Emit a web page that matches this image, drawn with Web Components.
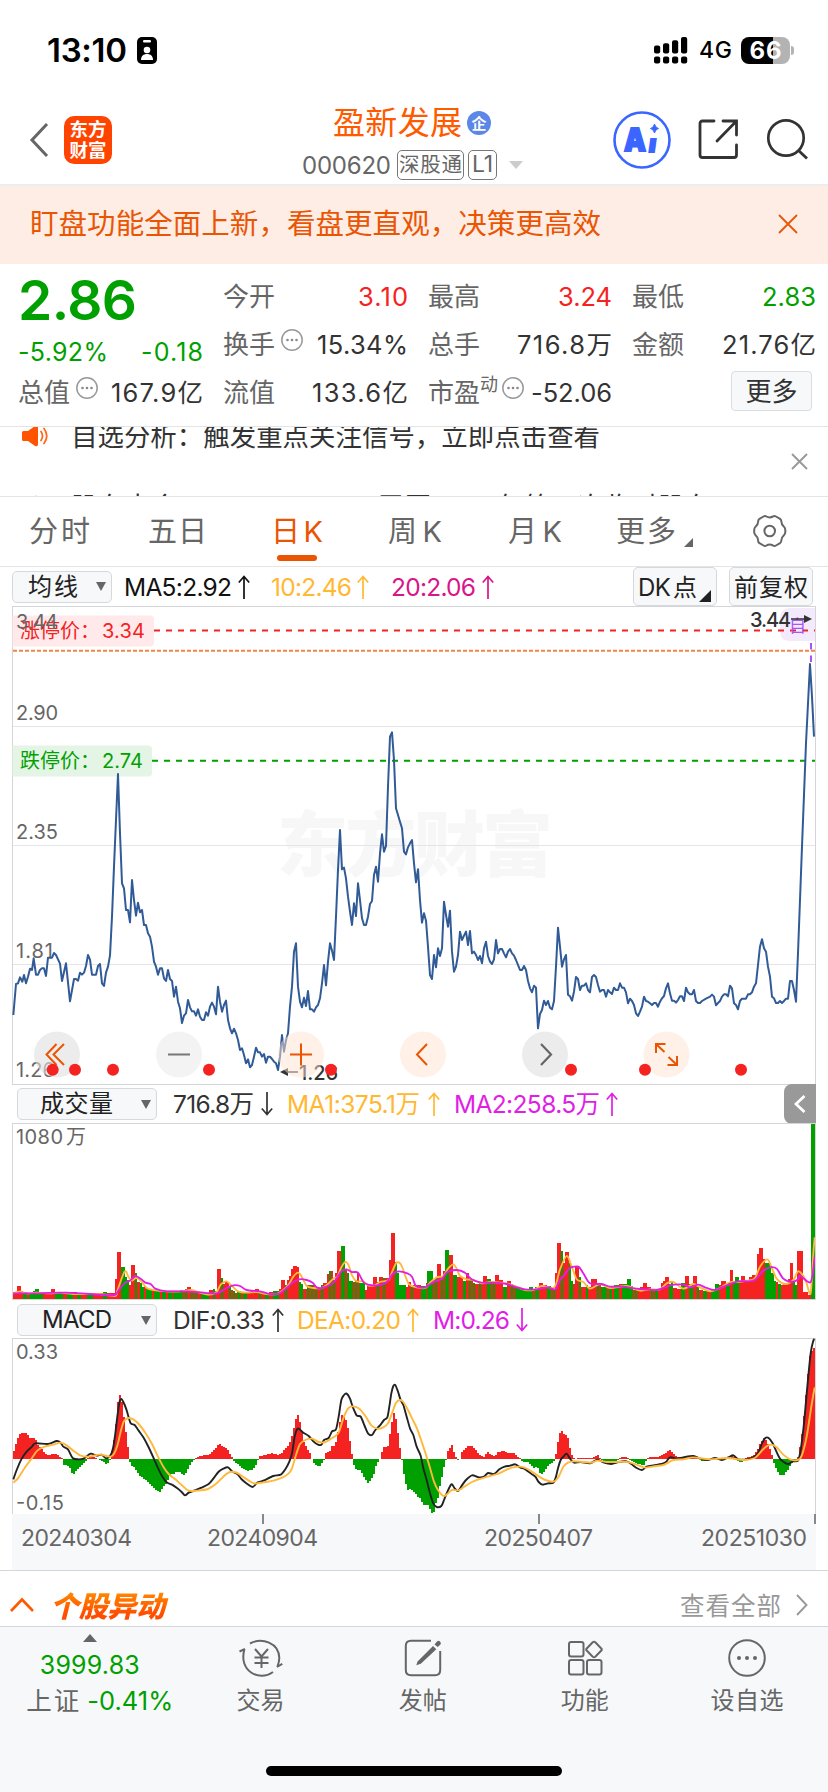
<!DOCTYPE html>
<html lang="zh-CN">
<head>
<meta charset="UTF-8">
<title>盈新发展 000620</title>
<style>
    body {
        margin: 0;
        width: 828px;
        height: 1792px;
        overflow: hidden;
        background: #fff;
        color: #333;
        font-family: Inter, "Noto Sans CJK SC", sans-serif;
        --up: #f52222;
        --down: #00a000;
        --brand: #ea5504;
    }
</style>
</head>
<body>
<stock-page></stock-page>

<script>
// small helper, every element renders static markup into an open root
function define(name, html) {
    customElements.define(name, class extends HTMLElement {
        constructor() {
            super();
            this.attachShadow({ mode: 'open' });
            this.shadowRoot.innerHTML = typeof html === 'function' ? html(this) : html;
        }
    });
}

/* ---------- icons ---------- */
const ICONS = {
    badge: [20, 27, '<rect width="20" height="27" rx="5" fill="#000"/><rect x="6" y="3" width="8" height="2.4" rx="1.2" fill="#fff"/><circle cx="10" cy="13" r="3.3" fill="#fff"/><path d="M4 23c0-4 2.5-6 6-6s6 2 6 6z" fill="#fff"/>'],
    signal: [34, 27, '<g fill="#000"><rect x="0" y="8.500" width="6.200" height="8" rx="2"/><rect x="9" y="6.200" width="6.200" height="10.300" rx="2"/><rect x="18" y="3.200" width="6.200" height="13.300" rx="2"/><rect x="27" y="0" width="6.200" height="16.500" rx="2"/><rect x="0" y="19.500" width="6.200" height="7" rx="2"/><rect x="9" y="19.500" width="6.200" height="7" rx="2"/><rect x="18" y="19.500" width="6.200" height="7" rx="2"/><rect x="27" y="19.500" width="6.200" height="7" rx="2"/></g>'],
    back: [20, 34, '<path d="M18 1 3 17l15 16" fill="none" stroke="#666" stroke-width="3"/>'],
    share: [42, 42, '<path d="M16 2H4.500Q2 2 2 4.500V36q0 2.500 2.500 2.500H36q2.500 0 2.500-2.500V26M25 2h13.500v14M38 2.500 19 22" fill="none" stroke="#333" stroke-width="2.800" stroke-linecap="round"/>'],
    search: [42, 42, '<circle cx="19" cy="19" r="17.700" fill="none" stroke="#333" stroke-width="2.700"/><path d="m31 31 9 8.500" stroke="#333" stroke-width="2.800"/>'],
    bigX: [20, 20, '<path d="m1 1 18 18M19 1 1 19" stroke="#ea5504" stroke-width="1.800"/>'],
    smallX: [17, 17, '<path d="m1 1 15 15M16 1 1 16" stroke="#999" stroke-width="1.900"/>'],
    more: [22, 22, '<circle cx="11" cy="11" r="10.200" fill="none" stroke="#999" stroke-width="1.500"/><g fill="#888"><circle cx="6.500" cy="11" r="1.300"/><circle cx="11" cy="11" r="1.300"/><circle cx="15.500" cy="11" r="1.300"/></g>'],
    horn: [27, 20, '<path d="M0 6.500q0-1.500 1.500-1.500H6l7-5q3-1 3 1.500v17q0 2.500-3 1.500l-7-5H1.500Q0 15 0 13.500z" fill="#ff5500"/><path d="M19 5.500q3 4.500 0 9M22 2.500q5.500 7.500 0 15" fill="none" stroke="#ff6a20" stroke-width="1.800" stroke-linecap="round"/>'],
    gear: [34, 32, '<path d="M10.500 1.500q1.500-1 3 0 3 1.800 6.500 0 1.500-1 3 0l4 2.300q1.500 1 1.400 3 0 2.500 2.300 4.600 1.600 1.600 1.600 3.300v2.600q0 1.700-1.600 3.300-2.300 2.100-2.300 4.600 0 2-1.400 3l-4 2.300q-1.500 1-3 0-3.500-1.800-6.500 0-1.500 1-3 0l-4-2.300q-1.500-1-1.400-3 0-2.500-2.300-4.600-1.600-1.600-1.600-3.300v-2.600q0-1.700 1.600-3.300 2.300-2.100 2.300-4.600 0-2 1.400-3z" fill="none" stroke="#666" stroke-width="2"/><circle cx="16.700" cy="16" r="5.300" fill="none" stroke="#666" stroke-width="2"/>'],
    up: [12, 24, '<path d="M6 24V1.500M.8 7.500 6 1.500l5.200 6" fill="none" stroke="currentColor" stroke-width="1.700"/>'],
    down: [12, 24, '<path d="M6 0v22.500M.8 16.500 6 22.500l5.200-6" fill="none" stroke="currentColor" stroke-width="1.700"/>'],
    drop: [10, 9, '<path d="M0 0h10L5 9z" fill="#666"/>'],
    fold: [24, 14, '<path d="M1 13 12 1.500 23 13" fill="none" stroke="#ff5a00" stroke-width="2.600"/>'],
    next: [12, 22, '<path d="m1 1 9.500 10L1 21" fill="none" stroke="#999" stroke-width="1.900"/>'],
    trade: [42, 40, '<g fill="none" stroke="#666" stroke-width="2"><path d="M10 4.500C22-2 39 4 39.300 19q0 4-2 9M36.800 28l5.500-3.200"/><path d="M33 33C19 43-2 32 4.500 10M5 10-.5 12.500"/><path d="m15 10 6.500 7.500L28 10M14.500 18.500h14M14.500 24h14M21.500 17.500V29"/></g>'],
    post: [38, 38, '<path d="M27 1.800H7Q1.800 1.800 1.800 7v24q0 5.200 5.200 5.200h24q5.200 0 5.200-5.200V12" fill="none" stroke="#666" stroke-width="2"/><path d="M13.500 22.500 29 7l3.300 3.300-15.500 14.500-4.500 1.500zM30.500 5.500 33 2.500q1.500-1.500 3 0t.5 3L33.700 8z" fill="#666"/>'],
    grid: [34, 36, '<g fill="none" stroke="#666" stroke-width="2"><rect x="1" y="2" width="14.500" height="14.500" rx="2.200"/><rect x="1" y="20" width="14.500" height="14.500" rx="2.200"/><rect x="19" y="20" width="14.500" height="14.500" rx="2.200"/><path d="m24.700 2.300-6 6.200q-1 1 0 2l6 6.200q1.300 1 2.600 0l6-6.200q1-1 0-2l-6-6.200q-1.300-1-2.600 0z"/></g>'],
    dots: [38, 38, '<circle cx="19" cy="19" r="17.800" fill="none" stroke="#666" stroke-width="2"/><g fill="#666"><circle cx="11" cy="19" r="2"/><circle cx="19" cy="19" r="2"/><circle cx="27" cy="19" r="2"/></g>']
};

define('app-icon', el => {
    const [w, h, body] = ICONS[el.getAttribute('name')];
    return `
        <style>
            :host { display: block; flex: none; width: ${w}px; height: ${h}px; }
            svg { display: block; overflow: visible; }
        </style>
        <svg width="${w}" height="${h}" viewBox="0 0 ${w} ${h}">${body}</svg>`;
});

/* ---------- status bar ---------- */
define('status-bar', `
    <style>
        :host { display: flex; align-items: center; height: 26px; padding: 37px 34px 31px 47px; color: #000; }
        .time { font-size: 33px; font-weight: 600; }
        .net { font-size: 23px; font-weight: 500; margin-left: 11px; }
        .battery {
            display: flex; justify-content: center;
            width: 49px; height: 27px; line-height: 27px; margin-left: 9px; border-radius: 8px;
            background: linear-gradient(90deg, #000 66%, #b3b3b3 66%);
            color: #fff; font-size: 24px; font-weight: 700;
        }
        .nub { width: 3px; height: 9px; margin-left: 1px; border-radius: 0 5px 5px 0; background: #b3b3b3; }
    </style>
    <text-run class="time" w="80">13:10</text-run>
    <app-icon name="badge" style="margin-left:10px"></app-icon>
    <app-icon name="signal" style="margin-left:auto"></app-icon>
    <text-run class="net" w="33">4G</text-run>
    <div class="battery"><text-run w="32">66</text-run></div>
    <div class="nub"></div>
`);

/* ---------- header ---------- */
define('stock-header', `
    <style>
        :host { display: grid; grid-template-columns: 302px 231px 1fr; height: 90px; border-bottom: 2px solid #ececec; }
        .left, .right { display: flex; align-items: center; padding-top: 1px; }
        .left { padding-left: 29px; gap: 15px; }
        .logo {
            width: 48px; height: 43px; padding: 2px 0 3px; border-radius: 10px; background: #ff4400; color: #fff;
            font: 700 18.500px/21px "Noto Sans CJK SC"; text-align: center;
        }
        .mid { padding-top: 8px; }
        .name { display: flex; align-items: center; height: 42px; margin-bottom: 5px; padding-left: 31px; gap: 5px; color: #ff5a00; font-size: 32px; line-height: 42px; }
        .corp { width: 24px; height: 24px; border-radius: 50%; background: #5b87e8; color: #fff; font: 700 15px/23px "Noto Sans CJK SC"; text-align: center; }
        .code { display: flex; align-items: center; height: 32px; color: #666; font-size: 24px; }
        .tag { box-sizing: border-box; height: 30px; border: 1.500px solid #777; border-radius: 5px; line-height: 27px; padding: 0 1px; font-size: 20.500px; margin-left: 6px; }
        .tri { margin-left: 12px; border: 7.500px solid transparent; border-top: 8px solid #ccc; border-bottom: 0; }
        .right { padding-left: 80px; }
        svg { display: block; flex: none; overflow: visible; }
    </style>
    <div class="left"><app-icon name="back"></app-icon><div class="logo">东方<br>财富</div></div>
    <div class="mid">
        <div class="name"><text-run w="129">盈新发展</text-run><div class="corp">企</div></div>
        <div class="code">
            <text-run w="89">000620</text-run>
            <div class="tag"><text-run w="63">深股通</text-run></div>
            <div class="tag" style="margin-left:4px;padding:0 3px;font-size:23px"><text-run w="21">L1</text-run></div>
            <div class="tri"></div>
        </div>
    </div>
    <div class="right">
        <svg width="58" height="58" viewBox="0 0 58 58">
            <circle cx="29" cy="29" r="27.500" fill="none" stroke="#3a66ff" stroke-width="2.600"/>
            <g fill="#3a66ff" stroke="#3a66ff" stroke-width="1.800" font-family="Inter" font-weight="900" font-size="31">
                <text x="11" y="40" textLength="22" lengthAdjust="spacingAndGlyphs">A</text>
                <text x="0" y="0" transform="translate(35 41) skewX(-8)" font-size="24">ı</text>
            </g>
            <path d="M41.500 13q.8 3.700 4 4.500-3.200.8-4 4.500-.8-3.700-4-4.500 3.200-.8 4-4.500z" fill="#3a66ff" stroke="#3a66ff"/>
        </svg>
        <app-icon name="share" style="margin-left:27px"></app-icon>
        <app-icon name="search" style="margin-left:27px"></app-icon>
    </div>
`);

/* ---------- notice ---------- */
define('notice-banner', `
    <style>
        :host { display: flex; align-items: center; justify-content: space-between; height: 78px; padding: 0 30px; background: #fdede4; color: var(--brand); font-size: 28.500px; }
        text-run { line-height: 40px; margin-bottom: 3px; }
        app-icon { margin-bottom: 2px; }
    </style>
    <text-run w="571"><slot></slot></text-run>
    <app-icon name="bigX"></app-icon>
`);

/* ---------- quote ---------- */
define('quote-cell', el => `
    <style>
        :host { display: flex; align-items: center; height: 48px; line-height: 48px; }
        .label { color: #666; font-size: 26px; flex: none; }
        .value { margin-left: auto; font-size: 25.500px; color: ${el.getAttribute('color') || '#333'}; }
        sup { font-size: 18px; line-height: 20px; color: #666; margin: 0 2px 17px 0; vertical-align: 0; }
        app-icon { margin: 0 0 10px 6px; }
        sup + app-icon { margin-left: 2px; }
    </style>
    <span class="label">${el.getAttribute('label')}</span>
    ${el.hasAttribute('sup') ? `<sup>${el.getAttribute('sup')}</sup>` : ''}
    ${el.hasAttribute('info') ? '<app-icon name="more"></app-icon>' : ''}
    <text-run class="value" w="${el.getAttribute('w')}">${el.getAttribute('value')}</text-run>
`);

define('quote-panel', `
    <style>
        :host { display: grid; grid-template-columns: 185px 185px 184px 184px; column-gap: 20px; height: 153px; padding: 9px 12px 0 18px; border-bottom: 1px solid #e4e4e4; width: 798px; }
        .col { display: flex; flex-direction: column; }
        .price { height: 55px; line-height: 54px; font-size: 55px; font-weight: 600; color: var(--down); }
        .chg { display: flex; justify-content: space-between; height: 41px; line-height: 49px; font-size: 25px; color: var(--down); }
        .more { box-sizing: border-box; width: 81px; height: 40px; margin: 2px 4px 0 auto; border: 1.500px solid #dadde2; border-radius: 4px; background: #f6f8fa; font-size: 26px; line-height: 39px; text-align: center; }
    </style>
    <div class="col">
        <text-run class="price" w="119">2.86</text-run>
        <div class="chg"><text-run w="90">-5.92%</text-run><text-run w="62">-0.18</text-run></div>
        <quote-cell label="总值" info value="167.9亿" w="92"></quote-cell>
    </div>
    <div class="col">
        <quote-cell label="今开" value="3.10" w="50" color="var(--up)"></quote-cell>
        <quote-cell label="换手" info value="15.34%" w="91"></quote-cell>
        <quote-cell label="流值" value="133.6亿" w="96"></quote-cell>
    </div>
    <div class="col">
        <quote-cell label="最高" value="3.24" w="54" color="var(--up)"></quote-cell>
        <quote-cell label="总手" value="716.8万" w="95"></quote-cell>
        <quote-cell label="市盈" sup="动" info value="-52.06" w="81"></quote-cell>
    </div>
    <div class="col">
        <quote-cell label="最低" value="2.83" w="54" color="var(--down)"></quote-cell>
        <quote-cell label="金额" value="21.76亿" w="94"></quote-cell>
        <div class="more">更多</div>
    </div>
`);

/* ---------- scrolling ticker, caught between two rows ---------- */
define('news-ticker', `
    <style>
        :host { display: flex; height: 69px; padding-right: 20px; border-bottom: 1px solid #e4e4e4; overflow: hidden; }
        .rows { flex: 1; margin-top: -26px; }
        .row { display: flex; align-items: center; height: 70px; padding-left: 22px; font-size: 26.400px; line-height: 40px; }
        text-run { margin-left: 22px; }
        .x { margin-top: 26px; }
    </style>
    <div class="rows">
        <div class="row"><app-icon name="horn"></app-icon><text-run w="529">自选分析：触发重点关注信号，立即点击查看</text-run></div>
        <div class="row"><app-icon name="horn"></app-icon><text-run w="640">股东大会：于2025-10-31召开2025年第三次临时股东</text-run></div>
    </div>
    <app-icon class="x" name="smallX"></app-icon>
`);

/* ---------- period tabs ---------- */
define('period-tab', `
    <style>
        :host { display: flex; flex-direction: column; align-items: center; height: 69px; line-height: 70px; font-size: 29px; color: #666; }
        :host([active]) { color: var(--brand); }
        :host([active])::after { content: ""; width: 40px; height: 6px; margin-top: -12px; border-radius: 3px; background: var(--brand); }
    </style>
    <slot></slot>
`);

define('period-tabs', `
    <style>
        :host { display: flex; height: 69px; padding-left: 29px; border-bottom: 1px solid #e4e4e4; }
        .tri { align-self: flex-start; margin: 41px 0 0 8px; border-left: 9px solid transparent; border-bottom: 9px solid #666; }
        app-icon { margin: 18px 0 0 60px; }
    </style>
    <period-tab><text-run w="61">分时</text-run></period-tab>
    <period-tab style="margin-left:58px"><text-run w="59">五日</text-run></period-tab>
    <period-tab style="margin-left:64px" active><text-run w="52">日K</text-run></period-tab>
    <period-tab style="margin-left:65px"><text-run w="54">周K</text-run></period-tab>
    <period-tab style="margin-left:66px"><text-run w="54">月K</text-run></period-tab>
    <period-tab style="margin-left:54px"><text-run w="60">更多</text-run></period-tab>
    <div class="tri"></div>
    <app-icon name="gear"></app-icon>
`);

/* ---------- indicator bars ---------- */
define('pick-box', `
    <style>
        :host { box-sizing: border-box; display: flex; align-items: center; flex: none; height: 32px; line-height: 30px; border: 1.500px solid #d5d9de; border-radius: 5px; background: #f6f8fa; color: #222; font-size: 24px; padding-right: 5px; }
        app-icon { margin-left: auto; }
    </style>
    <slot></slot><app-icon name="drop"></app-icon>
`);

define('index-value', el => `
    <style>
        :host { display: flex; align-items: center; gap: ${el.getAttribute('gap') || 7}px; font-size: 24.500px; line-height: 36px; }
    </style>
    <text-run w="${el.getAttribute('w')}"><slot></slot></text-run><app-icon name="${el.getAttribute('dir')}"></app-icon>
`);

define('ma-bar', `
    <style>
        :host { display: flex; align-items: center; height: 39px; padding-left: 12px; }
        .btn { box-sizing: border-box; height: 39px; border: 1.500px solid #d5d9de; border-radius: 5px; background: #f6f8fa; color: #222; font-size: 24px; line-height: 40px; position: relative; }
        .btn i { position: absolute; right: 5px; bottom: 3px; border-left: 12px solid transparent; border-bottom: 12px solid #222; }
        .dk { display: flex; gap: 2px; }
    </style>
    <pick-box style="width:100px"><text-run w="50" style="margin-left:15px">均线</text-run></pick-box>
    <index-value style="margin-left:12px;color:#111" w="108" gap="6" dir="up">MA5:2.92</index-value>
    <index-value style="margin-left:21px;color:#ffb830" w="81" gap="5" dir="up">10:2.46</index-value>
    <index-value style="margin-left:22px;color:#d8158a" w="85" gap="6" dir="up">20:2.06</index-value>
    <div class="btn dk" style="width:84px;margin-left:139px"><text-run w="33" style="margin-left:4px">DK</text-run><text-run w="24">点</text-run><i></i></div>
    <div class="btn" style="width:84px;margin-left:12px"><text-run w="74" style="margin-left:4px">前复权</text-run></div>
`);

define('volume-bar', `
    <style>
        :host { display: flex; align-items: center; height: 38px; padding-left: 17px; }
        .tab { display: grid; place-items: center; width: 32px; height: 40px; margin: 0 12px 0 auto; border-radius: 8px 0 0 8px; background: #999; }
    </style>
    <pick-box style="width:140px"><text-run w="73" style="margin-left:22px">成交量</text-run></pick-box>
    <index-value style="margin-left:16px" w="81" gap="7" dir="down">716.8万</index-value>
    <index-value style="margin-left:14px;color:#ffb830" w="133" gap="8" dir="up">MA1:375.1万</index-value>
    <index-value style="margin-left:14px;color:#e01ee6" w="146" gap="6" dir="up">MA2:258.5万</index-value>
    <div class="tab"><svg width="12" height="18"><path d="M10.500 1 2 9l8.500 8" fill="none" stroke="#fff" stroke-width="2.800"/></svg></div>
`);

define('macd-bar', `
    <style>
        :host { box-sizing: border-box; display: flex; align-items: center; height: 38px; padding: 2px 0 0 17px; }
    </style>
    <pick-box style="width:140px"><text-run w="70" style="margin-left:24px">MACD</text-run></pick-box>
    <index-value style="margin-left:16px" w="92" gap="7" dir="up">DIF:0.33</index-value>
    <index-value style="margin-left:13px;color:#ffb830" w="104" gap="6" dir="up">DEA:0.20</index-value>
    <index-value style="margin-left:14px;color:#e01ee6" w="77" gap="6" dir="down">M:0.26</index-value>
`);

/* ---------- chart data, in device pixels of the 3x canvas ---------- */
const parse = s => s.trim().split(/\s+/).map(p => p.split(',').map(Number));
// left and right half of a series share one y scale
const join = (a, b) => parse(a).concat(parse(b).map(([x, y]) => [x + 1230, y]).filter(p => p[0] >= 1262));
const line = pts => 'M' + pts.map(p => p.join(' ')).join('L');
function smooth(pts) {
    let d = 'M' + pts[0];
    for (let i = 0; i < pts.length - 1; i++) {
        const a = pts[Math.max(i - 1, 0)], b = pts[i], c = pts[i + 1], e = pts[Math.min(i + 2, pts.length - 1)];
        const k = 7;
        d += `C${b[0] + (c[0] - a[0]) / k} ${b[1] + (c[1] - a[1]) / k} ${c[0] - (e[0] - b[0]) / k} ${c[1] - (e[1] - b[1]) / k} ${c}`;
    }
    return d;
}

const PRICE = join(`40,1245 48,1152 54,1150 60,1132 67,1145 72,1125 78,1150 84,1130 90,1106 96,1110 101,1075 108,1124 114,1124 120,1110 126,1105 132,1105 138,1128 144,1073 156,1073 162,1059 168,1065 180,1091 186,1143 198,1090 210,1204 222,1137 228,1137 234,1142 240,1118 246,1124 252,1118 258,1098 264,1065 270,1079 276,1124 288,1124 294,1098 300,1092 306,1150 312,1158 318,1118 324,1100 330,1066 336,950 342,800 348,660 354,522 360,700 366,850 372,865 378,930 384,930 390,967 396,840 402,900 408,947 414,908 420,937 426,930 432,975 438,975 444,1000 450,1010 456,1040 462,1085 468,1100 474,1124 480,1105 486,1105 492,1135 498,1143 504,1110 510,1137 516,1143 522,1190 528,1160 534,1205 540,1225 546,1269 552,1247 558,1240 564,1200 570,1222 576,1234 582,1234 588,1247 594,1228 600,1250 606,1260 612,1260 618,1237 624,1247 630,1220 636,1208 642,1220 648,1243 654,1160 660,1205 666,1235 672,1215 678,1202 684,1260 690,1285 696,1300 702,1286 708,1300 714,1320 720,1350 726,1345 732,1365 738,1390 744,1378 750,1402 756,1395 762,1370 768,1343 774,1357 780,1357 786,1370 792,1362 798,1388 804,1370 810,1370 816,1377 822,1385 828,1390 834,1410 840,1370 846,1305 852,1355 858,1320 864,1300 870,1220 876,1160 882,1055 888,1030 894,1160 900,1205 906,1222 912,1193 918,1218 924,1173 930,1228 936,1228 942,1235 948,1222 954,1215 960,1195 966,1150 972,1095 978,1156 984,1085 990,1030 996,1052 1002,1080 1008,950 1014,810 1020,690 1026,808 1032,803 1038,835 1044,890 1050,935 1056,975 1062,910 1068,948 1074,850 1080,900 1086,955 1092,975 1098,975 1104,950 1110,912 1116,903 1122,825 1128,800 1134,845 1140,760 1146,703 1152,755 1158,738 1164,560 1170,410 1176,397 1182,480 1188,625 1194,645 1200,665 1206,685 1212,755 1218,763 1224,742 1230,730 1236,720 1242,790 1248,847 1254,808 1260,900`,
`36,968 42,940 48,962 54,1040 60,1125 66,1137 72,1065 78,1102 84,1045 90,1068 96,1045 102,905 108,945 114,980 120,932 126,1055 132,1115 138,1100 144,1065 150,995 156,1020 162,1007 168,995 174,1035 180,993 186,1060 192,1055 198,1065 204,1080 210,1068 216,1090 222,1045 228,1025 234,1068 240,1085 246,1092 252,1078 258,1020 264,1060 270,1047 276,1047 282,1060 288,1072 294,1055 300,1047 306,1060 312,1067 318,1080 330,1110 336,1110 342,1098 348,1110 354,1143 360,1165 366,1177 372,1157 378,1163 384,1285 390,1242 396,1230 402,1202 408,1215 414,1203 420,1223 426,1228 432,1203 438,1100 444,983 450,1040 456,1100 462,1078 468,1065 474,1184 480,1189 486,1202 492,1175 498,1131 504,1137 510,1170 516,1157 522,1157 528,1150 534,1170 540,1177 546,1131 552,1125 558,1131 564,1155 570,1175 576,1170 582,1170 588,1190 594,1170 600,1177 606,1182 612,1163 618,1170 624,1170 630,1150 636,1163 642,1163 648,1177 654,1210 660,1196 666,1203 672,1215 678,1240 684,1248 690,1235 696,1220 702,1190 708,1203 714,1205 720,1210 726,1215 732,1209 738,1209 744,1220 750,1205 756,1195 762,1188 768,1165 774,1150 780,1180 786,1202 792,1202 798,1208 804,1200 810,1189 816,1189 822,1203 828,1163 834,1177 840,1183 846,1183 852,1170 858,1203 864,1209 870,1209 876,1203 888,1196 900,1190 906,1184 912,1190 918,1216 924,1209 930,1203 936,1190 942,1183 948,1183 954,1189 960,1157 966,1165 972,1210 978,1215 984,1228 990,1203 996,1196 1008,1196 1014,1183 1020,1183 1026,1177 1032,1160 1038,1150 1044,1095 1050,1040 1056,1018 1062,1045 1068,1055 1074,1100 1080,1130 1086,1190 1092,1195 1098,1209 1104,1209 1110,1203 1116,1209 1122,1203 1128,1196 1134,1196 1140,1143 1146,1143 1152,1170 1158,1205 1164,1060 1176,740 1188,430 1200,192 1206,290 1212,410`);

/* ---------- price chart ---------- */
const tool = (cx, fill, body) => `<g transform="translate(${cx} 448.500)"><circle r="23" fill="${fill}"/><g fill="none" stroke="#ea5504" stroke-width="2">${body}</g></g>`;

define('price-chart', `
    <style>
        :host { display: block; height: 479px; }
        svg { display: block; overflow: visible; font-size: 20px; }
        .axis { fill: #666; }
    </style>
    <svg width="828" height="479" viewBox="0 0 828 479">
        <g fill="#f7f7f7" font-family="Noto Sans CJK SC" font-weight="900">
            <text x="277" y="264" font-size="71" textLength="276">东方财富</text>
        </g>
        <path d="M12 120.500h804M12 239.500h804M12 358.500h804" stroke="#e3e5ea"/>
        <path d="M12.500 0v479M815.500 0v479M12 .500h804M12 478.500h804" stroke="#d3d5d9"/>
        <path d="M12.500 9.500H150q4 0 4 4v23q0 4-4 4H12.500z" fill="#ffe9ea"/>
        <path d="M12.500 139.500H148q4 0 4 4v23q0 4-4 4H12.500z" fill="#e4f4e5"/>
        <path d="M780 12q0-10 10-10h25v33h-25q-10 0-10-10z" fill="#f3eafd"/>
        <path d="M154 24.500h661" stroke="#f52222" stroke-width="2" stroke-dasharray="6 6"/>
        <path d="M13 44.800h802" stroke="#f08548" stroke-width="2" stroke-dasharray="4 2"/>
        <path d="M152 154.700h663" stroke="#00a000" stroke-width="2" stroke-dasharray="6 6"/>
        <g fill="#f52222"><text x="20" y="32" textLength="80">涨停价：</text><text x="102" y="32" textLength="43">3.34</text></g>
        <g fill="#00a000"><text x="20" y="162" textLength="80">跌停价：</text><text x="102" y="162" textLength="41">2.74</text></g>
        <g fill="#a855f7"><text x="789" y="26" font-size="17">自</text></g>
        <path d="M811 37v6.500M811 49.500v6.500" stroke="#a855f7" stroke-width="2"/>
        <g class="axis">
            <text x="16" y="23" textLength="42">3.44</text>
            <text x="16" y="114" textLength="42">2.90</text>
            <text x="16" y="233" textLength="42">2.35</text>
            <text x="16" y="352" textLength="37">1.81</text>
            <text x="16" y="471" textLength="39">1.26</text>
        </g>
        <g transform="translate(0 -6) scale(.33333)"><path d="${line(PRICE)}" fill="none" stroke="#315b97" stroke-width="6" stroke-linejoin="round"/></g>
        <g fill="#333" font-weight="500">
            <text x="750" y="21" textLength="41">3.44</text>
            <text x="299" y="474" textLength="39">1.26</text>
        </g>
        <path d="M791 13h14M285 466h13" stroke="#333" stroke-width="1.600"/>
        <path d="m804 9 8 4-8 4zM288 462l-8 4 8 4z" fill="#333"/>
        ${tool(57, 'rgba(225,225,225,.62)', '<path d="M-.500-10.500-10.500 0l10 10.500M7-10.500-3.500 0 7 10.500"/>')}
        ${tool(179, 'rgba(235,235,235,.62)', '<path d="M-11 0h22" stroke="#777"/>')}
        ${tool(301, 'rgba(255,225,210,.5)', '<path d="M-11 0h22M0-11v22"/>')}
        ${tool(423, 'rgba(255,225,210,.5)', '<path d="M4-10.500-6 0 4 10.500"/>')}
        ${tool(545, 'rgba(225,225,225,.62)', '<path d="M-4-10.500 6 0-4 10.500" stroke="#666" stroke-width="2.200"/>')}
        ${tool(666.5, 'rgba(255,225,210,.5)', '<path d="M-10.500-1.500v-9h9.500M-10.500-10.500l8.500 8M10.500 1.500v9H1M10.500 10.500 2 2.500"/>')}
        <g fill="#f52222">${[52.7, 75, 113, 209, 331, 571, 645, 741].map(x => `<circle cx="${x}" cy="463.700" r="6"/>`).join('')}</g>
    </svg>
`);

/* ---------- volume chart ---------- */
// "x:top+colour": a bar reaches from the end of the one before it up to x
const BARS_L = '52:636r 64:618r 70:634r 82:637g 88:640r 100:638g 106:632g 118:626g 130:638g 142:638r 154:636r 166:628r 178:637g 190:639g 202:640r 208:638g 220:636g 232:637r 244:641g 262:642r 280:640g 292:643r 308:639r 320:636g 332:638r 346:640r 352:598r 364:516r 376:560g 382:592g 388:600g 394:615r 406:555r 412:578g 420:606r 426:610g 432:620g 438:618r 444:624g 456:628g 462:630r 480:632g 486:634r 498:636g 504:632r 516:632g 520:634r 530:632g 540:634g 550:630g 556:634r 562:628g 574:622r 580:632g 586:634r 592:634g 604:638r 628:642g 640:630r 646:628g 652:634r 664:568r 670:594g 676:612r 688:606r 694:622g 700:630r 706:634g 712:638r 724:634g 730:636r 742:638g 754:640r 766:634r 778:626r 784:640g 796:638r 808:640g 820:636r 838:632g 844:628r 856:600r 862:616g 868:600r 874:588r 880:568r 892:558r 898:562r 904:606g 910:612g 922:626r 928:614g 934:616r 940:616g 946:616r 952:624g 964:624r 970:614g 982:608r 988:582r 994:572g 1000:572r 1006:600g 1012:580r 1024:514r 1036:498g 1042:570r 1048:580g 1060:604g 1066:606r 1072:600g 1078:580r 1096:610g 1102:630r 1118:618r 1132:592r 1138:606g 1150:592r 1156:594g 1168:594r 1174:540r 1186:460r 1192:545g 1198:580g 1206:614g 1218:616g 1224:622r 1234:606r 1240:622g 1254:614r';
const BARS_R = '34:616r 48:618g 52:610r 60:574g 70:574g 76:600r 82:592g 94:552r 100:590g 106:574r 118:510g 130:526r 142:586g 160:590r 168:604g 178:580r 184:600g 190:600r 196:610g 208:612r 214:606g 220:606r 232:588r 244:598g 250:608r 256:606g 268:584r 280:600r 292:620g 304:604r 308:612g 316:614r 322:618g 334:624g 358:626g 370:622g 376:630r 386:622g 400:608r 412:616r 424:618g 430:626r 436:626g 442:578r 453:488r 459:512g 465:550r 472:516r 478:516r 484:548g 490:602g 496:612r 507:558r 513:590g 528:622r 534:614g 544:620r 560:596r 568:616g 574:614r 590:620g 596:624r 606:624g 612:618r 626:616g 636:612r 650:612g 652:598g 662:598g 668:618g 676:630r 682:626g 690:628r 700:620r 710:610r 722:622r 730:628g 736:628r 744:630g 752:628r 760:608r 766:602r 776:592r 782:612g 790:606g 800:624r 814:626r 826:610g 838:588r 848:612g 860:588r 868:620g 880:630r 892:632g 904:634r 914:628g 926:612g 934:616r 948:602r 960:610g 968:570r 975:606g 987:592g 994:604r 1004:588r 1018:602r 1026:590r 1042:586r 1048:522r 1058:504r 1065:536r 1070:548g 1082:548g 1092:578g 1098:602g 1104:606r 1112:612g 1118:614r 1134:612r 1140:598r 1148:548r 1154:606g 1160:614g 1180:512r 1194:636r 1203:645r 1216:130g';

function bars(list, from, dx) {
    let prev = from, out = '';
    list.split(' ').forEach(b => {
        const [x, rest] = b.split(':');
        const top = parseInt(rest);
        out += `<rect x="${prev + dx}" y="${top}" width="${x - prev + .5}" height="${658 - top}" fill="${rest.endsWith('r') ? '#f52222' : '#00a000'}"/>`;
        prev = +x;
    });
    return out;
}

const VMA1 = join('40,640 60,634 80,640 110,638 150,640 180,638 220,642 300,642 345,648 352,632 364,598 372,578 378,574 386,592 396,602 408,594 422,602 440,624 460,630 500,634 540,634 575,630 600,638 628,644 650,636 662,614 680,604 696,618 714,634 740,638 770,636 800,642 830,642 850,630 866,614 880,590 894,578 904,588 920,618 940,624 966,624 984,612 1000,596 1012,590 1024,562 1036,546 1046,556 1056,586 1070,604 1090,604 1104,616 1124,616 1140,606 1166,600 1176,576 1188,550 1198,548 1206,560 1216,588 1228,614 1250,622',
    '46,624 60,608 80,592 100,588 114,566 130,553 140,566 150,588 170,598 190,600 216,610 240,606 270,608 290,610 320,620 345,630 370,630 395,618 430,624 440,606 450,568 470,528 484,556 500,598 520,606 540,626 570,612 600,624 650,618 690,632 720,628 750,628 770,610 790,606 820,626 850,612 870,622 900,634 930,624 960,606 985,606 1010,602 1034,596 1050,560 1072,538 1084,560 1100,596 1125,612 1150,600 1164,574 1180,588 1190,610 1202,640 1210,520 1214,472');
const VMA2 = join('40,640 100,640 200,638 300,644 344,645 356,630 376,608 390,602 406,588 424,598 436,608 452,612 466,626 500,634 560,634 610,638 650,640 680,624 700,616 720,618 740,630 780,634 810,642 838,640 862,622 880,606 898,598 920,600 938,608 950,622 966,624 1000,608 1024,574 1040,568 1056,576 1074,578 1090,606 1104,614 1130,616 1160,606 1178,582 1196,574 1222,580 1236,590 1246,616 1256,622',
    '46,622 70,606 96,596 112,576 140,570 165,578 185,598 215,608 250,608 290,612 320,622 345,628 380,628 410,622 436,628 446,606 464,584 480,564 505,560 520,580 540,610 575,612 600,620 640,620 680,626 740,630 780,616 820,614 840,622 865,614 890,624 915,630 950,616 985,604 1030,602 1060,572 1080,562 1100,566 1120,596 1145,606 1165,598 1170,586 1202,606 1214,530');

define('volume-chart', `
    <style>
        :host { display: block; height: 177px; }
        svg { display: block; font-size: 20px; }
    </style>
    <svg width="828" height="177" viewBox="0 0 828 177">
        <g transform="translate(0 -43) scale(.33333)">
            <g shape-rendering="crispEdges">${bars(BARS_L, 40, 0)}${bars(BARS_R, 24, 1230)}</g>
            <g fill="none" stroke-width="5.500">
                <path d="${smooth(VMA1)}" stroke="#ffb83a"/>
                <path d="${smooth(VMA2)}" stroke="#e01ee6"/>
            </g>
        </g>
        <path d="M12 .500h804M12 176.500h804M12.500 0v177M815.500 0v177" stroke="#d3d5d9"/>
        <g fill="#666"><text x="16" y="21" textLength="47">1080</text><text x="66" y="21">万</text></g>
    </svg>
`);

/* ---------- MACD chart ---------- */
const HIST = join('40,462 46,442 52,420 58,407 64,400 82,400 88,412 100,415 108,415 112,430 120,440 130,452 140,462 150,466 160,461 172,462 180,470 188,476 190,492 200,495 208,497 214,510 220,523 228,513 240,500 250,490 258,482 264,476 270,470 280,470 290,476 300,478 310,482 318,492 326,487 332,478 334,466 340,440 346,400 352,345 357,279 363,287 366,300 372,342 378,390 384,435 390,470 392,500 400,495 410,510 420,525 440,540 460,560 470,568 480,575 490,560 500,550 506,535 512,520 520,522 530,515 540,515 552,524 560,518 568,500 576,485 582,478 590,474 600,467 625,466 636,456 650,443 660,430 668,440 676,440 686,450 692,465 700,476 702,482 715,490 730,505 745,511 758,508 768,495 775,480 780,468 800,465 815,460 835,464 846,462 852,450 864,440 870,430 880,400 888,360 893,338 900,360 906,390 912,425 922,445 932,462 936,474 940,486 950,496 962,496 970,484 974,476 976,462 990,455 998,436 1006,440 1012,410 1020,370 1026,345 1032,345 1040,362 1046,390 1052,430 1058,470 1062,490 1072,512 1080,506 1088,520 1104,548 1112,540 1122,525 1128,500 1136,482 1142,476 1146,460 1152,442 1164,442 1170,410 1176,370 1182,338 1188,352 1194,390 1200,440 1206,472 1210,500 1216,540 1224,568 1235,566 1244,575 1256,590',
    '34,593 40,614 56,614 66,636 72,638 78,610 84,600 90,560 98,525 106,482 110,476 112,458 120,448 126,430 132,452 138,470 142,476 146,478 152,476 154,458 166,446 178,436 188,438 198,450 208,464 222,472 234,456 244,464 256,470 264,456 280,453 300,460 312,458 322,468 332,476 338,484 356,486 372,502 384,500 390,518 396,522 406,510 420,490 432,484 436,476 442,448 448,404 456,391 462,400 474,408 480,440 486,462 492,472 498,476 510,475 550,475 563,464 570,472 575,476 580,480 605,484 625,480 630,476 636,472 648,470 656,476 662,480 680,488 704,494 710,480 714,476 720,472 750,470 768,460 780,450 790,458 800,470 820,474 840,470 860,474 870,476 876,482 900,480 910,476 960,474 970,464 976,476 985,482 995,486 1002,478 1006,476 1010,472 1030,468 1044,448 1052,430 1062,414 1070,420 1078,440 1086,460 1090,476 1094,490 1102,512 1112,524 1124,522 1134,510 1144,492 1152,484 1162,482 1168,460 1176,410 1186,320 1194,230 1202,160 1214,144');
const DIF = join('40,538 50,510 64,478 80,455 96,440 106,430 145,432 170,423 182,428 190,440 204,448 218,474 235,478 252,475 272,461 290,467 305,464 318,475 332,465 340,440 346,400 352,350 358,308 364,297 370,306 378,325 384,345 392,370 404,375 416,392 430,412 444,438 458,468 472,500 486,528 500,547 516,554 532,565 545,576 555,586 566,578 580,573 604,563 626,552 640,536 655,516 670,506 684,502 696,514 712,522 724,537 742,552 758,561 772,548 790,542 820,528 842,524 856,508 868,485 876,460 884,410 890,390 896,386 910,398 926,408 940,424 954,434 964,434 972,420 986,414 996,394 1008,388 1016,350 1024,300 1032,285 1040,281 1050,296 1058,320 1070,346 1082,350 1094,378 1104,400 1116,405 1126,390 1140,376 1152,360 1162,352 1168,320 1174,280 1180,258 1186,255 1194,275 1202,300 1210,315 1220,350 1230,385 1240,405 1250,440',
    '32,467 40,505 50,540 60,580 70,610 80,621 94,618 102,600 110,580 124,553 134,565 144,573 156,556 168,540 186,526 206,532 222,530 234,519 252,522 268,508 284,500 300,497 316,493 330,502 346,508 362,520 376,530 386,546 398,554 414,550 430,548 438,530 444,505 452,480 460,470 470,461 480,476 492,488 512,486 540,490 562,479 580,487 604,492 626,486 650,484 664,492 680,504 696,510 710,500 730,496 755,492 768,486 780,472 800,476 820,472 850,468 870,476 895,480 915,474 935,480 955,472 970,466 985,478 1010,478 1030,472 1044,460 1056,430 1066,414 1076,414 1088,430 1098,452 1110,476 1124,488 1136,492 1148,484 1164,482 1172,450 1182,370 1192,260 1202,160 1210,122 1214,118');
const DEA = join('40,548 54,535 74,504 96,474 112,452 134,440 160,434 182,428 200,436 220,452 240,466 264,470 300,464 332,470 344,458 354,430 362,395 372,363 386,354 400,358 416,372 436,398 456,432 474,470 490,500 506,522 526,538 548,558 566,572 590,572 624,567 650,550 672,528 690,516 712,519 736,535 762,550 790,547 820,542 848,532 866,520 876,505 888,465 900,432 916,420 936,416 956,426 976,426 1000,412 1016,398 1030,355 1044,326 1056,319 1076,325 1096,348 1114,376 1132,386 1150,382 1164,370 1176,340 1188,308 1200,300 1210,306 1224,330 1240,363 1252,388',
    '40,440 56,490 72,545 84,570 100,588 112,582 126,570 146,571 166,558 186,546 206,538 240,528 266,521 284,512 306,503 330,500 350,506 370,518 388,530 406,540 430,545 446,530 460,500 474,488 490,484 520,486 545,488 562,482 590,486 650,486 680,494 705,503 730,499 760,495 790,480 820,478 850,472 900,478 950,474 1000,480 1034,474 1052,456 1068,440 1084,434 1100,442 1120,464 1140,478 1164,480 1176,465 1190,410 1204,320 1214,262');

function histogram(pts) {
    let out = '', i = 0;
    for (let x = 40; x < 2444; x += 6) {
        const mid = x + 3;
        while (i < pts.length - 2 && pts[i + 1][0] < mid) i++;
        const [a, b] = [pts[i], pts[i + 1]];
        const t = Math.min(1, (mid - a[0]) / (b[0] - a[0]));
        const y = a[1] + (b[1] - a[1]) * t;
        const up = y <= 476;
        out += `<rect x="${x}" y="${up ? y : 476}" width="6.300" height="${Math.abs(y - 476) + 1.5}" fill="${up ? '#f52222' : '#00a000'}"/>`;
    }
    return out;
}

define('macd-chart', `
    <style>
        :host { display: block; height: 176px; }
        svg { display: block; font-size: 20px; }
    </style>
    <svg width="828" height="176" viewBox="0 0 828 176">
        <path d="M12 .500h804M12.500 0v176M815.500 0v176" stroke="#d3d5d9"/>
        <g transform="translate(0 -38) scale(.33333)">
            <g shape-rendering="crispEdges">${histogram(HIST)}</g>
            <g fill="none" stroke-width="5.700">
                <path d="${smooth(DIF)}" stroke="#222"/>
                <path d="${smooth(DEA)}" stroke="#ffb83a"/>
            </g>
        </g>
        <g fill="#666">
            <text x="16" y="21" textLength="42">0.33</text>
            <text x="16" y="172" textLength="48">-0.15</text>
        </g>
    </svg>
`);

define('date-axis', `
    <style>
        :host { display: block; height: 56px; margin: 0 12px; background: #f7f8fa; }
        svg { display: block; font-size: 23px; overflow: visible; }
    </style>
    <svg width="804" height="56">
        <path d="M251 0v10M527 0v10M803 0v10" stroke="#888" stroke-width="2"/>
        <g fill="#666">
            <text x="9" y="32" textLength="111">20240304</text>
            <text x="195" y="32" textLength="111">20240904</text>
            <text x="472" y="32" textLength="109">20250407</text>
            <text x="689" y="32" textLength="106">20251030</text>
        </g>
    </svg>
`);

/* ---------- unusual moves row ---------- */
define('moves-row', `
    <style>
        :host { display: flex; align-items: center; height: 55px; line-height: 55px; padding: 0 20px 0 10px; border-top: 1px solid #d3d7dc; border-bottom: 1px solid #d3d7dc; overflow: hidden; }
        app-icon { margin-top: 13px; }
        .title {
            margin: 10px 0 0 16px; padding-right: 6px; font: italic 900 29px/40px "Noto Sans CJK SC"; color: transparent;
            background: linear-gradient(#ff8a00 20%, #ff4d00 75%); background-clip: text; -webkit-background-clip: text;
        }
        .all { margin: 14px 15px 0 auto; font-size: 24.500px; line-height: 40px; color: #999; }
    </style>
    <app-icon name="fold"></app-icon>
    <text-run class="title" w="115">个股异动</text-run>
    <text-run class="all" w="101">查看全部</text-run>
    <app-icon name="next"></app-icon>
`);

/* ---------- bottom nav ---------- */
define('nav-item', el => `
    <style>
        :host { display: flex; flex-direction: column; align-items: center; width: 162.500px; color: #666; font-size: 24px; line-height: 30px; }
        .icon { display: grid; place-items: center; height: 38px; margin: 12px 0 9px; }
    </style>
    <div class="icon"><app-icon name="${el.getAttribute('icon')}"></app-icon></div>
    <slot></slot>
`);

define('bottom-nav', `
    <style>
        :host { display: block; height: 165px; background: #f6f8fa; }
        .items { display: flex; height: 139px; }
        .index { width: 180px; display: flex; flex-direction: column; align-items: center; box-sizing: border-box; padding-top: 7px; color: var(--down); }
        .tri { border: 7px solid transparent; border-bottom: 8px solid #666; border-top: 0; }
        .num { font-size: 25px; line-height: 46px; }
        .line { display: flex; font-size: 25.500px; line-height: 25px; gap: 8px; margin-left: 20px; }
        .line span { color: #666; }
        .home { width: 296px; height: 10px; margin: 0 auto; border-radius: 5px; background: #000; }
    </style>
    <div class="items">
        <div class="index">
            <div class="tri"></div>
            <text-run class="num" w="100">3999.83</text-run>
            <div class="line"><span><text-run w="53">上证</text-run></span><text-run w="86">-0.41%</text-run></div>
        </div>
        <nav-item icon="trade"><text-run w="48">交易</text-run></nav-item>
        <nav-item icon="post"><text-run w="48">发帖</text-run></nav-item>
        <nav-item icon="grid"><text-run w="48">功能</text-run></nav-item>
        <nav-item icon="dots"><text-run w="73">设自选</text-run></nav-item>
    </div>
    <div class="home"></div>
`);

define('stock-page', `
    <style>
        :host { display: flex; flex-direction: column; width: 828px; height: 1792px; }
    </style>
    <status-bar></status-bar>
    <stock-header></stock-header>
    <notice-banner>盯盘功能全面上新，看盘更直观，决策更高效</notice-banner>
    <quote-panel></quote-panel>
    <news-ticker></news-ticker>
    <period-tabs></period-tabs>
    <ma-bar></ma-bar>
    <price-chart></price-chart>
    <volume-bar></volume-bar>
    <volume-chart></volume-chart>
    <macd-bar></macd-bar>
    <macd-chart></macd-chart>
    <date-axis></date-axis>
    <moves-row></moves-row>
    <bottom-nav></bottom-nav>
`);

// one line of text spread over a fixed width by letter-spacing.
// registered last so that everything around it already has its styles
customElements.define('text-run', class extends HTMLElement {
    constructor() {
        super();
        this.attachShadow({ mode: 'open' });
        this.shadowRoot.innerHTML = `
            <style>:host { display: block; flex: none; white-space: nowrap; text-align: left; } span { display: inline-block; vertical-align: top; }</style>
            <span><slot></slot></span>`;
    }
    connectedCallback() {
        const span = this.shadowRoot.querySelector('span');
        const slot = this.querySelector('slot');
        const text = slot ? slot.assignedNodes({ flatten: true }).map(n => n.textContent).join('') : this.textContent;
        const w = Number(this.getAttribute('w'));
        const n = text.trim().length;
        span.style.letterSpacing = (w - span.getBoundingClientRect().width) / Math.max(n - 1, 1) + 'px';
        this.style.width = w + 'px';
    }
});
</script>
</body>
</html>
